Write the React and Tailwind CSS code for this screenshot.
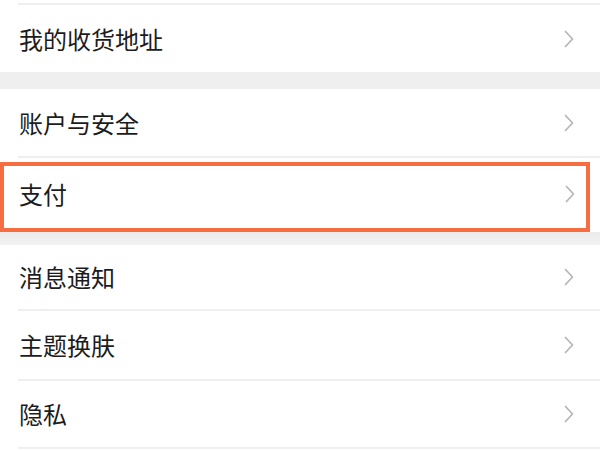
import React from "react";

function Chevron() {
  return (
    <svg width="10" height="18" viewBox="0 0 10 18" className="shrink-0">
      <polyline points="1.5,1.5 8.5,9 1.5,16.5" fill="none" stroke="#b5b5b5" strokeWidth="1.7" strokeLinecap="round" strokeLinejoin="round" />
    </svg>
  );
}

function Row({ label, h }) {
  return (
    <div className={`flex items-center justify-between pl-[19px] pr-[26px] bg-white ${h}`}>
      <span className="text-[24px] leading-none text-[#1c1c1c]">{label}</span>
      <Chevron />
    </div>
  );
}

function Sep() {
  return (
    <div className="bg-white pl-[18px]">
      <div className="h-[2px] bg-[#efefef]" />
    </div>
  );
}

export default function App() {
  return (
    <div
      className="w-[600px] h-[450px] overflow-hidden bg-white flex flex-col"
      style={{ fontFamily: '"Noto Sans CJK SC", "Noto Sans", sans-serif' }}
    >
      <div className="h-[3px] bg-white shrink-0" />
      <Sep />
      <Row label="我的收货地址" h="h-[67px]" />
      <div className="h-[17px] bg-[#efefef] shrink-0" />
      <Row label="账户与安全" h="h-[67px]" />
      <Sep />
      <div className="h-[4px] bg-white shrink-0" />
      <div className="h-[70px] w-[590px] border-4 border-[#f76d42] flex items-center justify-between pl-[15px] pr-[11px] pb-[7px] bg-white shrink-0">
        <span className="text-[24px] leading-none text-[#1c1c1c]">支付</span>
        <Chevron />
      </div>
      <div className="h-[13px] bg-gradient-to-b from-[#ebebeb] to-[#f3f3f3] shrink-0" />
      <Row label="消息通知" h="h-[64px]" />
      <Sep />
      <Row label="主题换肤" h="h-[68px]" />
      <Sep />
      <Row label="隐私" h="h-[66px]" />
      <Sep />
    </div>
  );
}
